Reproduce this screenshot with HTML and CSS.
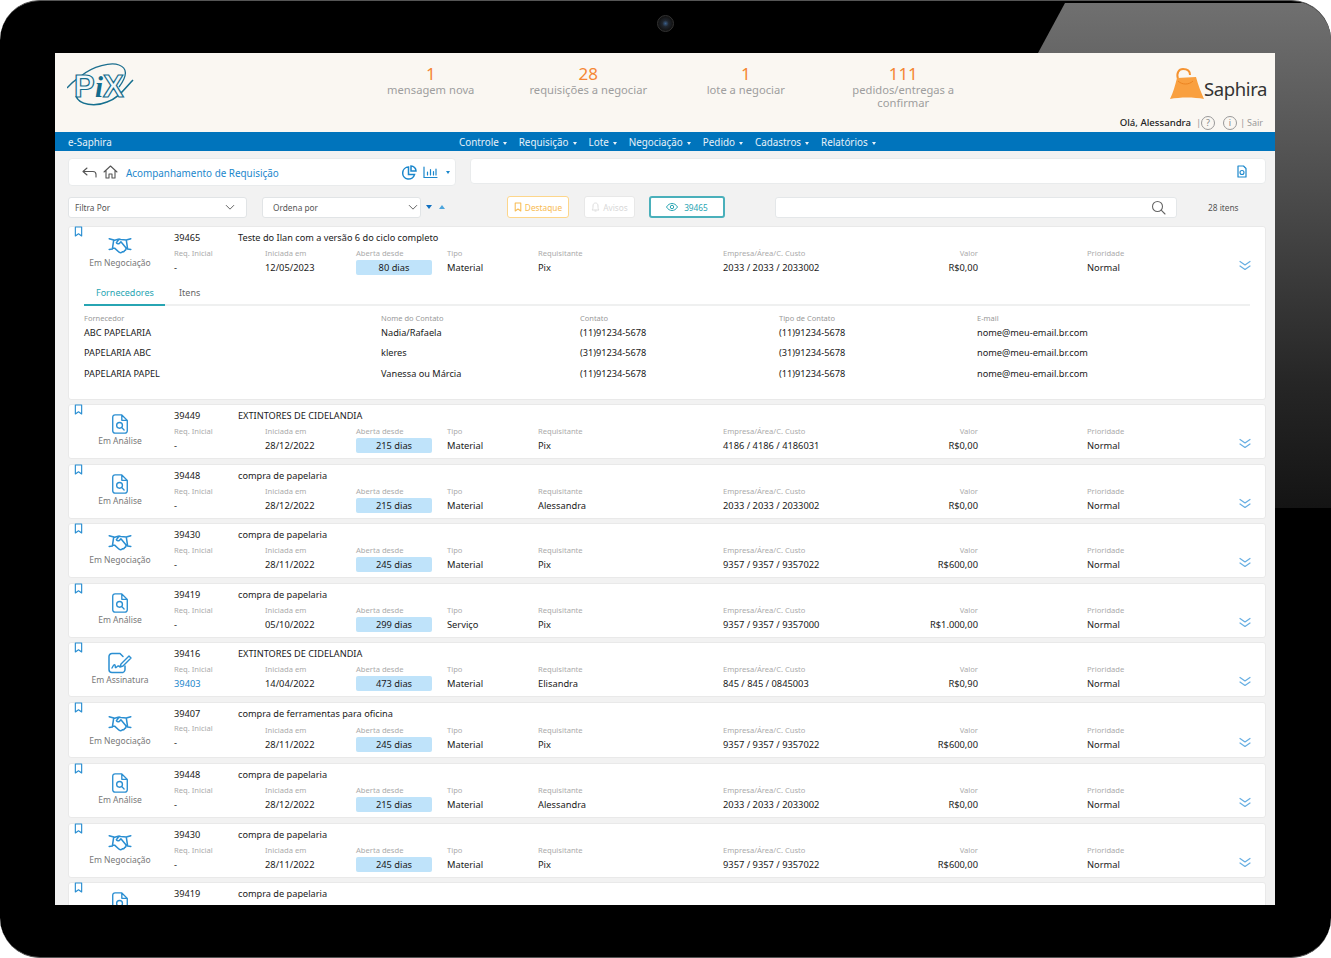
FILE: index.html
```html
<!DOCTYPE html>
<html lang="pt-BR">

<head>
    <meta charset="UTF-8">
    <title>Acompanhamento de Requisição</title>
    <link rel="stylesheet" href="styles.css">
</head>

<body>
    <svg class="icon-defs" width="0" height="0">
        <symbol id="i-hands" viewBox="0 0 26 20">
            <path d="M1 3l5 1.500-1.500 10L1 15M25 3l-5 1.500 1.500 10L25 15M6 5l5-1.500 3 .5 6 .5M5 13.500l2 0 5 4.500c1.500 1 3 .5 3.500-.5 1.500.5 2.500-.5 2.500-1.500 1.500 0 2-1.500 1.500-2.500M12 3.500L9 7.500c.5 1.500 2.500 1.500 3.500.5l1.500-1.500 6 7" fill="none" stroke="currentColor" stroke-width="1.700" stroke-linecap="round" stroke-linejoin="round" />
        </symbol>
        <symbol id="i-doc" viewBox="0 0 18 22">
            <path d="M3.500 1h7.500l6 6v11.500a2.500 2.500 0 0 1-2.500 2.500h-11A2.500 2.500 0 0 1 1 18.500v-15A2.500 2.500 0 0 1 3.500 1zM11 1v6h6" fill="none" stroke="currentColor" stroke-width="1.500" stroke-linejoin="round" />
            <circle cx="8.500" cy="12.500" r="3.200" fill="none" stroke="currentColor" stroke-width="1.500" />
            <path d="M11 15l2.500 2.500" stroke="currentColor" stroke-width="1.500" stroke-linecap="round" />
        </symbol>
        <symbol id="i-sign" viewBox="0 0 24 22">
            <path d="M15 20.500H4a3 3 0 0 1-3-3v-13a3 3 0 0 1 3-3h8l3 3M17 14v3.500a3 3 0 0 1-1 2.200" fill="none" stroke="currentColor" stroke-width="1.500" stroke-linecap="round" stroke-linejoin="round" />
            <path d="M4 16c1.500-3 2.500-4 3-3s0 3 1 2.500 1.500-2 2.500-1.500 1 1 2 .5M13 12l8-8 2 2-8 8-3 1z" fill="none" stroke="currentColor" stroke-width="1.400" stroke-linecap="round" stroke-linejoin="round" />
        </symbol>
        <symbol id="i-mark" viewBox="0 0 10 12">
            <path d="M1.500 1h7v10L5 8.500 1.500 11z" fill="none" stroke="currentColor" stroke-width="1.300" stroke-linejoin="round" />
        </symbol>
        <symbol id="i-more" viewBox="0 0 12 11">
            <path d="M1 1.500l5 3.500 5-3.500M1 6l5 3.500L11 6" fill="none" stroke="currentColor" stroke-width="1.200" stroke-linecap="round" stroke-linejoin="round" />
        </symbol>
        <symbol id="i-chev" viewBox="0 0 12 8">
            <path d="M1.500 1.500L6 6l4.500-4.500" fill="none" stroke="currentColor" stroke-width="1.200" stroke-linecap="round" stroke-linejoin="round" />
        </symbol>
    </svg>

    <div class="tablet">
        <div class="glare"></div>
        <div class="camera"></div>

        <div class="screen">
            <header class="top">
                <div class="logo-box">
                    <svg class="logo-pix" width="68" height="44" viewBox="0 0 68 44">
                        <path d="M0 25C6 18 10 16 14 13 26 3 44-1 52 2c8 3 9 10 0 22" fill="none" stroke="#1c6f8f" stroke-width="1.300" />
                        <path d="M9 33c3 9 19 11 31 6 12-4 18-14 26-22" fill="none" stroke="#16708f" stroke-width="1.600" />
                        <text class="pix-word" x="7" y="34">P</text>
                        <text class="pix-i" x="28" y="34">i</text>
                        <text class="pix-word" x="36" y="34">X</text>
                    </svg>
                </div>
                <div class="stats">
                    <div class="stat"><b>1</b><span>mensagem nova</span></div>
                    <div class="stat"><b>28</b><span>requisições a negociar</span></div>
                    <div class="stat"><b>1</b><span>lote a negociar</span></div>
                    <div class="stat"><b>111</b><span>pedidos/entregas a confirmar</span></div>
                </div>
                <div class="top-right">
                    <div class="saphira">
                        <svg width="36" height="33" viewBox="0 0 36 33">
                            <path d="M9 11C7 5 10 1 14 1s7 2 7 6" fill="none" stroke="#f59331" stroke-width="2" />
                            <path d="M8 10l19-1c2 8 5 15 8 22-10-2-24-2-34 0 3-6 5-13 7-21z" fill="#f9a040" />
                            <path d="M9 13c4 4 11 4 15 0" fill="none" stroke="#ec8421" stroke-width="1" />
                        </svg>
                        <span>Saphira</span>
                    </div>
                    <div class="greet">
                        <b>Olá, Alessandra</b><i>|</i>
                        <span class="round">?</span>
                        <span class="round">i</span>
                        <i>|</i><em>Sair</em>
                    </div>
                </div>
            </header>

            <nav class="nav">
                <span class="brand">e-Saphira</span>
                <ul class="menu">
                    <li>Controle</li>
                    <li>Requisição</li>
                    <li>Lote</li>
                    <li>Negociação</li>
                    <li>Pedido</li>
                    <li>Cadastros</li>
                    <li>Relatórios</li>
                </ul>
            </nav>

            <main class="content">
                <div class="toolbar">
                    <div class="crumb">
                        <svg class="crumb-back" width="15" height="11" viewBox="0 0 15 11">
                            <path d="M5 1L1 4.500 5 8M1 4.500h10c2 0 3 1.500 3 3v2.500" fill="none" stroke="#555" stroke-width="1.100" stroke-linecap="round" stroke-linejoin="round" />
                        </svg>
                        <svg class="crumb-home" width="15" height="14" viewBox="0 0 15 14">
                            <path d="M1 7l6.500-6L14 7M3 5.500V13h3V9h3v4h3V5.500" fill="none" stroke="#555" stroke-width="1.100" stroke-linecap="round" stroke-linejoin="round" />
                        </svg>
                        <span class="crumb-title">Acompanhamento de Requisição</span>
                        <svg class="crumb-pie" width="15" height="15" viewBox="0 0 15 15">
                            <path d="M6.500 2a6 6 0 1 0 6 7.500H6.500zM9 1a5 5 0 0 1 5 5H9z" fill="none" stroke="#1b87cc" stroke-width="1.500" />
                        </svg>
                        <svg class="crumb-bars" width="15" height="13" viewBox="0 0 15 13">
                            <path d="M1 1v10.500h13M4.500 9V6M7.500 9V3.500M10.500 9V5.500M13 9V3" fill="none" stroke="#1b87cc" stroke-width="1.200" stroke-linecap="round" />
                        </svg>
                        <span class="caret caret-blue"></span>
                    </div>
                    <div class="toolbar-right">
                        <svg width="10" height="13" viewBox="0 0 10 13">
                            <path d="M1 1h5.500L9 3.500V12H1z" fill="none" stroke="#1b87cc" stroke-width="1.200" stroke-linejoin="round" />
                            <circle cx="5" cy="7.500" r="2" fill="none" stroke="#1b87cc" stroke-width="1.100" />
                        </svg>
                    </div>
                </div>

                <div class="filters">
                    <div class="select select-filter"><span>Filtra Por</span><svg width="10" height="7"><use href="#i-chev" /></svg></div>
                    <div class="select select-order"><span>Ordena por</span><svg width="10" height="7"><use href="#i-chev" /></svg></div>
                    <div class="sort"><span class="sort-down"></span><span class="sort-up"></span></div>
                    <div class="pill-btn btn-mark"><svg width="8" height="10"><use href="#i-mark" /></svg>Destaque</div>
                    <div class="pill-btn btn-warn">
                        <svg width="9" height="10" viewBox="0 0 9 10"><path d="M1 8c1-1 1-2 1-4s1-3 2.500-3S7 2 7 4s0 3 1 4zM3.500 9h2" fill="none" stroke="#ddd" /></svg>Avisos
                    </div>
                    <div class="pill-btn btn-view">
                        <svg width="12" height="8" viewBox="0 0 12 8"><path d="M.5 4C2 1.500 4 .5 6 .5s4 1 5.500 3.500C10 6.500 8 7.500 6 7.500S2 6.500.5 4z" fill="none" stroke="#2aa5b3" /><circle cx="6" cy="4" r="1.700" fill="none" stroke="#2aa5b3" /></svg>39465
                    </div>
                    <div class="search">
                        <svg width="15" height="15" viewBox="0 0 15 15"><circle cx="6.500" cy="6.500" r="5" fill="none" stroke="#666" stroke-width="1.100" /><path d="M10.200 10.200L14 14" stroke="#666" stroke-width="1.100" stroke-linecap="round" /></svg>
                    </div>
                    <div class="count">28 itens</div>
                </div>

                <div class="list">
                    <article class="card card-open">
                        <svg class="mark"><use href="#i-mark" /></svg>
                        <div class="card-main">
                            <div class="status"><svg class="st-hands"><use href="#i-hands" /></svg><span>Em Negociação</span></div>
                            <div class="card-body">
                                <div class="head"><b>39465</b><span>Teste do Ilan com a versão 6 do ciclo completo</span></div>
                                <div class="fields">
                                    <div><label>Req. Inicial</label><p>-</p></div>
                                    <div><label>Iniciada em</label><p>12/05/2023</p></div>
                                    <div class="open-days"><label>Aberta desde</label><p>80 dias</p></div>
                                    <div><label>Tipo</label><p>Material</p></div>
                                    <div><label>Requisitante</label><p>Pix</p></div>
                                    <div><label>Empresa/Área/C. Custo</label><p>2033 / 2033 / 2033002</p></div>
                                    <div class="money"><label>Valor</label><p>R$0,00</p></div>
                                    <div class="prio"><label>Prioridade</label><p>Normal</p></div>
                                    <svg class="more"><use href="#i-more" /></svg>
                                </div>
                            </div>
                        </div>
                        <div class="tabs"><span class="tab tab-on">Fornecedores</span><span class="tab">Itens</span></div>
                        <div class="suppliers">
                            <label>Fornecedor</label><label>Nome do Contato</label><label>Contato</label><label>Tipo de Contato</label><label>E-mail</label>
                            <p>ABC PAPELARIA</p><p>Nadia/Rafaela</p><p>(11)91234-5678</p><p>(11)91234-5678</p><p>nome@meu-email.br.com</p>
                            <p>PAPELARIA ABC</p><p>kleres</p><p>(31)91234-5678</p><p>(31)91234-5678</p><p>nome@meu-email.br.com</p>
                            <p>PAPELARIA PAPEL</p><p>Vanessa ou Márcia</p><p>(11)91234-5678</p><p>(11)91234-5678</p><p>nome@meu-email.br.com</p>
                        </div>
                    </article>

                    <article class="card">
                        <svg class="mark"><use href="#i-mark" /></svg>
                        <div class="card-main">
                            <div class="status"><svg class="st-doc"><use href="#i-doc" /></svg><span>Em Análise</span></div>
                            <div class="card-body">
                                <div class="head"><b>39449</b><span>EXTINTORES DE CIDELANDIA</span></div>
                                <div class="fields">
                                    <div><label>Req. Inicial</label><p>-</p></div>
                                    <div><label>Iniciada em</label><p>28/12/2022</p></div>
                                    <div class="open-days"><label>Aberta desde</label><p>215 dias</p></div>
                                    <div><label>Tipo</label><p>Material</p></div>
                                    <div><label>Requisitante</label><p>Pix</p></div>
                                    <div><label>Empresa/Área/C. Custo</label><p>4186 / 4186 / 4186031</p></div>
                                    <div class="money"><label>Valor</label><p>R$0,00</p></div>
                                    <div class="prio"><label>Prioridade</label><p>Normal</p></div>
                                    <svg class="more"><use href="#i-more" /></svg>
                                </div>
                            </div>
                        </div>
                    </article>

                    <article class="card">
                        <svg class="mark"><use href="#i-mark" /></svg>
                        <div class="card-main">
                            <div class="status"><svg class="st-doc"><use href="#i-doc" /></svg><span>Em Análise</span></div>
                            <div class="card-body">
                                <div class="head"><b>39448</b><span>compra de papelaria</span></div>
                                <div class="fields">
                                    <div><label>Req. Inicial</label><p>-</p></div>
                                    <div><label>Iniciada em</label><p>28/12/2022</p></div>
                                    <div class="open-days"><label>Aberta desde</label><p>215 dias</p></div>
                                    <div><label>Tipo</label><p>Material</p></div>
                                    <div><label>Requisitante</label><p>Alessandra</p></div>
                                    <div><label>Empresa/Área/C. Custo</label><p>2033 / 2033 / 2033002</p></div>
                                    <div class="money"><label>Valor</label><p>R$0,00</p></div>
                                    <div class="prio"><label>Prioridade</label><p>Normal</p></div>
                                    <svg class="more"><use href="#i-more" /></svg>
                                </div>
                            </div>
                        </div>
                    </article>

                    <article class="card">
                        <svg class="mark"><use href="#i-mark" /></svg>
                        <div class="card-main">
                            <div class="status"><svg class="st-hands"><use href="#i-hands" /></svg><span>Em Negociação</span></div>
                            <div class="card-body">
                                <div class="head"><b>39430</b><span>compra de papelaria</span></div>
                                <div class="fields">
                                    <div><label>Req. Inicial</label><p>-</p></div>
                                    <div><label>Iniciada em</label><p>28/11/2022</p></div>
                                    <div class="open-days"><label>Aberta desde</label><p>245 dias</p></div>
                                    <div><label>Tipo</label><p>Material</p></div>
                                    <div><label>Requisitante</label><p>Pix</p></div>
                                    <div><label>Empresa/Área/C. Custo</label><p>9357 / 9357 / 9357022</p></div>
                                    <div class="money"><label>Valor</label><p>R$600,00</p></div>
                                    <div class="prio"><label>Prioridade</label><p>Normal</p></div>
                                    <svg class="more"><use href="#i-more" /></svg>
                                </div>
                            </div>
                        </div>
                    </article>

                    <article class="card">
                        <svg class="mark"><use href="#i-mark" /></svg>
                        <div class="card-main">
                            <div class="status"><svg class="st-doc"><use href="#i-doc" /></svg><span>Em Análise</span></div>
                            <div class="card-body">
                                <div class="head"><b>39419</b><span>compra de papelaria</span></div>
                                <div class="fields">
                                    <div><label>Req. Inicial</label><p>-</p></div>
                                    <div><label>Iniciada em</label><p>05/10/2022</p></div>
                                    <div class="open-days"><label>Aberta desde</label><p>299 dias</p></div>
                                    <div><label>Tipo</label><p>Serviço</p></div>
                                    <div><label>Requisitante</label><p>Pix</p></div>
                                    <div><label>Empresa/Área/C. Custo</label><p>9357 / 9357 / 9357000</p></div>
                                    <div class="money"><label>Valor</label><p>R$1.000,00</p></div>
                                    <div class="prio"><label>Prioridade</label><p>Normal</p></div>
                                    <svg class="more"><use href="#i-more" /></svg>
                                </div>
                            </div>
                        </div>
                    </article>

                    <article class="card">
                        <svg class="mark"><use href="#i-mark" /></svg>
                        <div class="card-main">
                            <div class="status"><svg class="st-sign"><use href="#i-sign" /></svg><span>Em Assinatura</span></div>
                            <div class="card-body">
                                <div class="head"><b>39416</b><span>EXTINTORES DE CIDELANDIA</span></div>
                                <div class="fields">
                                    <div><label>Req. Inicial</label><p class="link">39403</p></div>
                                    <div><label>Iniciada em</label><p>14/04/2022</p></div>
                                    <div class="open-days"><label>Aberta desde</label><p>473 dias</p></div>
                                    <div><label>Tipo</label><p>Material</p></div>
                                    <div><label>Requisitante</label><p>Elisandra</p></div>
                                    <div><label>Empresa/Área/C. Custo</label><p>845 / 845 / 0845003</p></div>
                                    <div class="money"><label>Valor</label><p>R$0,90</p></div>
                                    <div class="prio"><label>Prioridade</label><p>Normal</p></div>
                                    <svg class="more"><use href="#i-more" /></svg>
                                </div>
                            </div>
                        </div>
                    </article>

                    <article class="card card-tall">
                        <svg class="mark"><use href="#i-mark" /></svg>
                        <div class="card-main">
                            <div class="status"><svg class="st-hands"><use href="#i-hands" /></svg><span>Em Negociação</span></div>
                            <div class="card-body">
                                <div class="head"><b>39407</b><span>compra de ferramentas para oficina</span></div>
                                <div class="fields">
                                    <div class="shift-up"><label>Req. Inicial</label><p>-</p></div>
                                    <div><label>Iniciada em</label><p>28/11/2022</p></div>
                                    <div class="open-days"><label>Aberta desde</label><p>245 dias</p></div>
                                    <div><label>Tipo</label><p>Material</p></div>
                                    <div><label>Requisitante</label><p>Pix</p></div>
                                    <div><label>Empresa/Área/C. Custo</label><p>9357 / 9357 / 9357022</p></div>
                                    <div class="money"><label>Valor</label><p>R$600,00</p></div>
                                    <div class="prio"><label>Prioridade</label><p>Normal</p></div>
                                    <svg class="more"><use href="#i-more" /></svg>
                                </div>
                            </div>
                        </div>
                    </article>

                    <article class="card">
                        <svg class="mark"><use href="#i-mark" /></svg>
                        <div class="card-main">
                            <div class="status"><svg class="st-doc"><use href="#i-doc" /></svg><span>Em Análise</span></div>
                            <div class="card-body">
                                <div class="head"><b>39448</b><span>compra de papelaria</span></div>
                                <div class="fields">
                                    <div><label>Req. Inicial</label><p>-</p></div>
                                    <div><label>Iniciada em</label><p>28/12/2022</p></div>
                                    <div class="open-days"><label>Aberta desde</label><p>215 dias</p></div>
                                    <div><label>Tipo</label><p>Material</p></div>
                                    <div><label>Requisitante</label><p>Alessandra</p></div>
                                    <div><label>Empresa/Área/C. Custo</label><p>2033 / 2033 / 2033002</p></div>
                                    <div class="money"><label>Valor</label><p>R$0,00</p></div>
                                    <div class="prio"><label>Prioridade</label><p>Normal</p></div>
                                    <svg class="more"><use href="#i-more" /></svg>
                                </div>
                            </div>
                        </div>
                    </article>

                    <article class="card">
                        <svg class="mark"><use href="#i-mark" /></svg>
                        <div class="card-main">
                            <div class="status"><svg class="st-hands"><use href="#i-hands" /></svg><span>Em Negociação</span></div>
                            <div class="card-body">
                                <div class="head"><b>39430</b><span>compra de papelaria</span></div>
                                <div class="fields">
                                    <div><label>Req. Inicial</label><p>-</p></div>
                                    <div><label>Iniciada em</label><p>28/11/2022</p></div>
                                    <div class="open-days"><label>Aberta desde</label><p>245 dias</p></div>
                                    <div><label>Tipo</label><p>Material</p></div>
                                    <div><label>Requisitante</label><p>Pix</p></div>
                                    <div><label>Empresa/Área/C. Custo</label><p>9357 / 9357 / 9357022</p></div>
                                    <div class="money"><label>Valor</label><p>R$600,00</p></div>
                                    <div class="prio"><label>Prioridade</label><p>Normal</p></div>
                                    <svg class="more"><use href="#i-more" /></svg>
                                </div>
                            </div>
                        </div>
                    </article>

                    <article class="card card-cut">
                        <svg class="mark"><use href="#i-mark" /></svg>
                        <div class="card-main">
                            <div class="status"><svg class="st-doc"><use href="#i-doc" /></svg></div>
                            <div class="card-body">
                                <div class="head"><b>39419</b><span>compra de papelaria</span></div>
                            </div>
                        </div>
                    </article>
                </div>
            </main>
        </div>
    </div>
</body>

</html>
```

FILE: styles.css
```css
:root {
    --blue: #0074bc;
    --icon-blue: #2b8fd2;
    --orange: #f58634;
    --teal: #27a5b3;
    --text: #333;
    --muted: #ababab;
    --line: #e9ebec;
}

* {
    box-sizing: border-box;
}

body {
    margin: 0;
    background: #fff;
    font-family: "Noto Sans", "Open Sans", Arial, sans-serif;
    color: var(--text);
    overflow: hidden;
}

.icon-defs {
    position: absolute;
}

p {
    margin: 0;
}

label {
    display: block;
}

/* moldura do tablet */
.tablet {
    position: relative;
    width: 1331px;
    height: 958px;
    padding: 53px 56px 53px 55px;
    background: #000;
    border-radius: 40px;
    border-top: 1px solid #555;
    border-bottom: 1px solid #555;
    overflow: hidden;
}

.glare {
    position: absolute;
    top: 2px;
    left: 1038px;
    width: 293px;
    height: 505px;
    background: linear-gradient(180deg, #707070 0%, #4e4e4e 35%, #262626 75%, #141414 100%);
    clip-path: polygon(27px 0, 100% 0, 100% 100%, 0 100%, 0 50px);
}

.camera {
    position: absolute;
    top: 14px;
    left: 657px;
    width: 17px;
    height: 17px;
    border-radius: 50%;
    border: 1px solid #333;
    background: radial-gradient(circle, #3a5f8a 0, #20262e 30%, #111 70%);
}

.screen {
    position: relative;
    margin-top: -1px;
    height: 852px;
    background: #f2f2f2;
    overflow: hidden;
}

/* cabecalho */
.top {
    display: flex;
    height: 79px;
    background: #faf7f2;
}

.logo-box {
    width: 297px;
    padding: 10px 0 0 12px;
}

.pix-word {
    font-family: "Liberation Sans", sans-serif;
    font-weight: 700;
    font-size: 31px;
    fill: #f2f8fa;
    stroke: #146c8c;
    stroke-width: 1.200;
}

.pix-i {
    font-family: "Liberation Serif", serif;
    font-style: italic;
    font-weight: 700;
    font-size: 29px;
    fill: #146c8c;
}

.stats {
    display: flex;
    width: 630px;
}

.stat {
    width: 157.500px;
    padding: 12px 18px 0;
    text-align: center;
    font-size: 11.200px;
    line-height: 13px;
    color: #9e9e9e;
}

.stat b {
    display: block;
    margin-bottom: 1px;
    font-weight: 400;
    font-size: 17px;
    line-height: 17px;
    color: var(--orange);
}

.top-right {
    flex: 1;
    display: flex;
    flex-direction: column;
    align-items: flex-end;
    padding: 14px 8px 0 0;
}

.saphira {
    display: flex;
    align-items: flex-end;
    height: 34px;
}

.saphira svg {
    margin-right: -1px;
}

.saphira span {
    font-size: 18.500px;
    line-height: 25px;
    letter-spacing: -.4px;
    color: #333;
}

.greet {
    display: flex;
    align-items: center;
    gap: 3px;
    margin-top: 15px;
    padding-right: 4px;
    font-size: 9.600px;
    line-height: 14px;
}

.greet b {
    margin-right: 2px;
    font-weight: 500;
    color: #222;
}

.greet i,
.greet em {
    font-style: normal;
    color: #999;
}

.greet i {
    width: 2px;
}

.greet em {
    margin-left: 2px;
    font-size: 9px;
}

.round {
    display: inline-block;
    width: 14px;
    height: 14px;
    border: 1px solid #999;
    border-radius: 50%;
    text-align: center;
    font-size: 9px;
    line-height: 12px;
    color: #888;
}

.round + .round {
    margin-left: 5px;
}

/* menu */
.nav {
    display: flex;
    align-items: center;
    height: 19px;
    padding-left: 13px;
    background: var(--blue);
    color: #e8f2f9;
    font-size: 9.850px;
}

.brand {
    width: 391px;
}

.menu {
    display: flex;
    gap: 12px;
    margin: 0;
    padding: 0;
    list-style: none;
}

.menu li::after,
.caret {
    content: "";
    display: inline-block;
    margin-left: 4px;
    vertical-align: 1px;
    border-style: solid;
    border-width: 3px 2.500px 0;
    border-color: #e8f2f9 transparent transparent;
}

.caret-blue {
    margin-left: 8px;
    border-top-color: #1b87cc;
}

/* conteudo */
.content {
    padding: 7px 9px 0 13px;
}

.toolbar {
    display: flex;
    gap: 14px;
    height: 28px;
}

.crumb,
.toolbar-right {
    display: flex;
    align-items: center;
    background: #fff;
    border: 1px solid var(--line);
    border-radius: 4px;
}

.crumb {
    width: 388px;
    padding-left: 13px;
}

.crumb-home {
    margin-left: 6px;
}

.crumb-title {
    margin: 2px 0 0 8px;
    width: 276px;
    font-size: 9.900px;
    color: #1b87cc;
}

.crumb-bars {
    margin-left: 6px;
}

.toolbar-right {
    flex: 1;
    height: 26px;
    justify-content: flex-end;
    padding-right: 18px;
}

.filters {
    display: flex;
    align-items: center;
    height: 22px;
    margin-top: 10px;
    font-size: 8.300px;
}

.select {
    display: flex;
    align-items: center;
    justify-content: space-between;
    height: 21px;
    background: #fff;
    border: 1px solid #e1e4e6;
    border-radius: 3px;
    color: #555;
}

.select svg {
    color: #666;
}

.select-filter {
    width: 179px;
    padding: 0 11px 0 6px;
}

.select-order {
    width: 159px;
    margin-left: 15px;
    padding: 0 2px 0 10px;
}

.sort {
    display: flex;
    gap: 7px;
    width: 86px;
    padding-left: 5px;
}

.sort-down {
    border-style: solid;
    border-width: 4px 3.500px 0;
    border-color: #0e6fc0 transparent transparent;
}

.sort-up {
    border-style: solid;
    border-width: 0 3.500px 4px;
    border-color: transparent transparent #4da5dc;
}

.pill-btn {
    display: flex;
    align-items: center;
    justify-content: center;
    gap: 3px;
    height: 22px;
    background: #fff;
    border-radius: 3px;
}

.btn-mark {
    width: 62px;
    border: 1px solid #fdd68b;
    color: #f8bb52;
}

.btn-warn {
    width: 51px;
    margin-left: 15px;
    border: 1px solid #e8e8e8;
    color: #d8d8d8;
}

.btn-view {
    gap: 6px;
    width: 76px;
    margin-left: 14px;
    border: 2px solid #4ab0bb;
    color: var(--teal);
}

.search {
    display: flex;
    align-items: center;
    justify-content: flex-end;
    width: 402px;
    height: 21px;
    margin-left: 50px;
    padding-right: 10px;
    background: #fff;
    border: 1px solid #e4e7e9;
    border-radius: 3px;
}

.count {
    margin-left: 31px;
    color: #555;
}

/* lista */
.list {
    display: flex;
    flex-direction: column;
    gap: 4.500px;
    margin-top: 8px;
}

.card {
    position: relative;
    height: 55px;
    flex-shrink: 0;
    background: #fff;
    border: 1px solid #e9e9e9;
    border-radius: 3px;
}

.card-open {
    height: 173.500px;
}

.card-tall {
    height: 56px;
    margin-top: .500px;
    margin-bottom: .500px;
}

.mark {
    position: absolute;
    top: -1px;
    left: 5px;
    width: 9px;
    height: 11px;
    color: var(--icon-blue);
}

.card-main {
    display: flex;
}

.status {
    display: flex;
    flex-direction: column;
    align-items: center;
    width: 102px;
    height: 53px;
    margin-right: 3px;
    padding-top: 9px;
    font-size: 8.500px;
    line-height: 12px;
    color: #777;
}

.status svg {
    color: var(--icon-blue);
    height: 18px;
    width: 24px;
    margin-bottom: 3px;
}

.status .st-doc {
    height: 20px;
    margin-bottom: 1px;
}

.status .st-sign {
    height: 22px;
    margin-bottom: 0;
}

.card-body {
    flex: 1;
    padding-top: 4px;
}

.head {
    display: flex;
    font-size: 9.200px;
    line-height: 13px;
    color: #1a1a1a;
}

.head b {
    width: 64px;
    font-weight: 400;
}

.fields {
    display: grid;
    grid-template-columns: 91px 91px 91px 91px 185px 180px 75px 109px 152px 16px;
    margin-top: 3px;
}

.fields label {
    font-size: 7.600px;
    line-height: 13px;
    color: var(--muted);
}

.fields p {
    font-size: 9.300px;
    line-height: 15px;
    color: #1a1a1a;
}

.fields .link {
    color: #1b87cc;
}

.open-days p {
    width: 76px;
    background: #bfe3fa;
    border-radius: 2px;
    text-align: center;
}

.money {
    text-align: right;
}

.prio {
    grid-column: 9;
}

.more {
    align-self: end;
    width: 12px;
    height: 11px;
    margin-bottom: 4px;
    color: #66aee2;
}

/* linha mais alta */
.card-tall .head {
    line-height: 14px;
}

.card-tall .head b {
    line-height: 13px;
}

.card-tall .status {
    padding-top: 11px;
}

.card-tall .shift-up {
    margin-top: -2px;
}

/* aberto */
.tabs {
    display: flex;
    margin: 2px 15px 0;
    height: 24px;
    border-bottom: 2px solid #eff0f0;
    font-size: 9px;
    line-height: 22px;
    color: #666;
}

.tab {
    padding: 0 12px;
    margin-right: 2px;
}

.tab-on {
    margin-bottom: -2px;
    width: 81px;
    border-bottom: 2px solid var(--teal);
    color: var(--teal);
    white-space: nowrap;
}

.suppliers {
    display: grid;
    grid-template-columns: 297px 199px 199px 198px 1fr;
    grid-auto-rows: 20.500px;
    margin: 8px 15px 0;
    font-size: 9.200px;
}

.suppliers label {
    height: 8px;
    font-size: 7.500px;
    line-height: 8px;
    color: #999;
}

.suppliers p {
    line-height: 14px;
    color: #1a1a1a;
}

.suppliers label,
.suppliers p {
    align-self: start;
}

.suppliers p {
    margin-top: -9px;
}
```
